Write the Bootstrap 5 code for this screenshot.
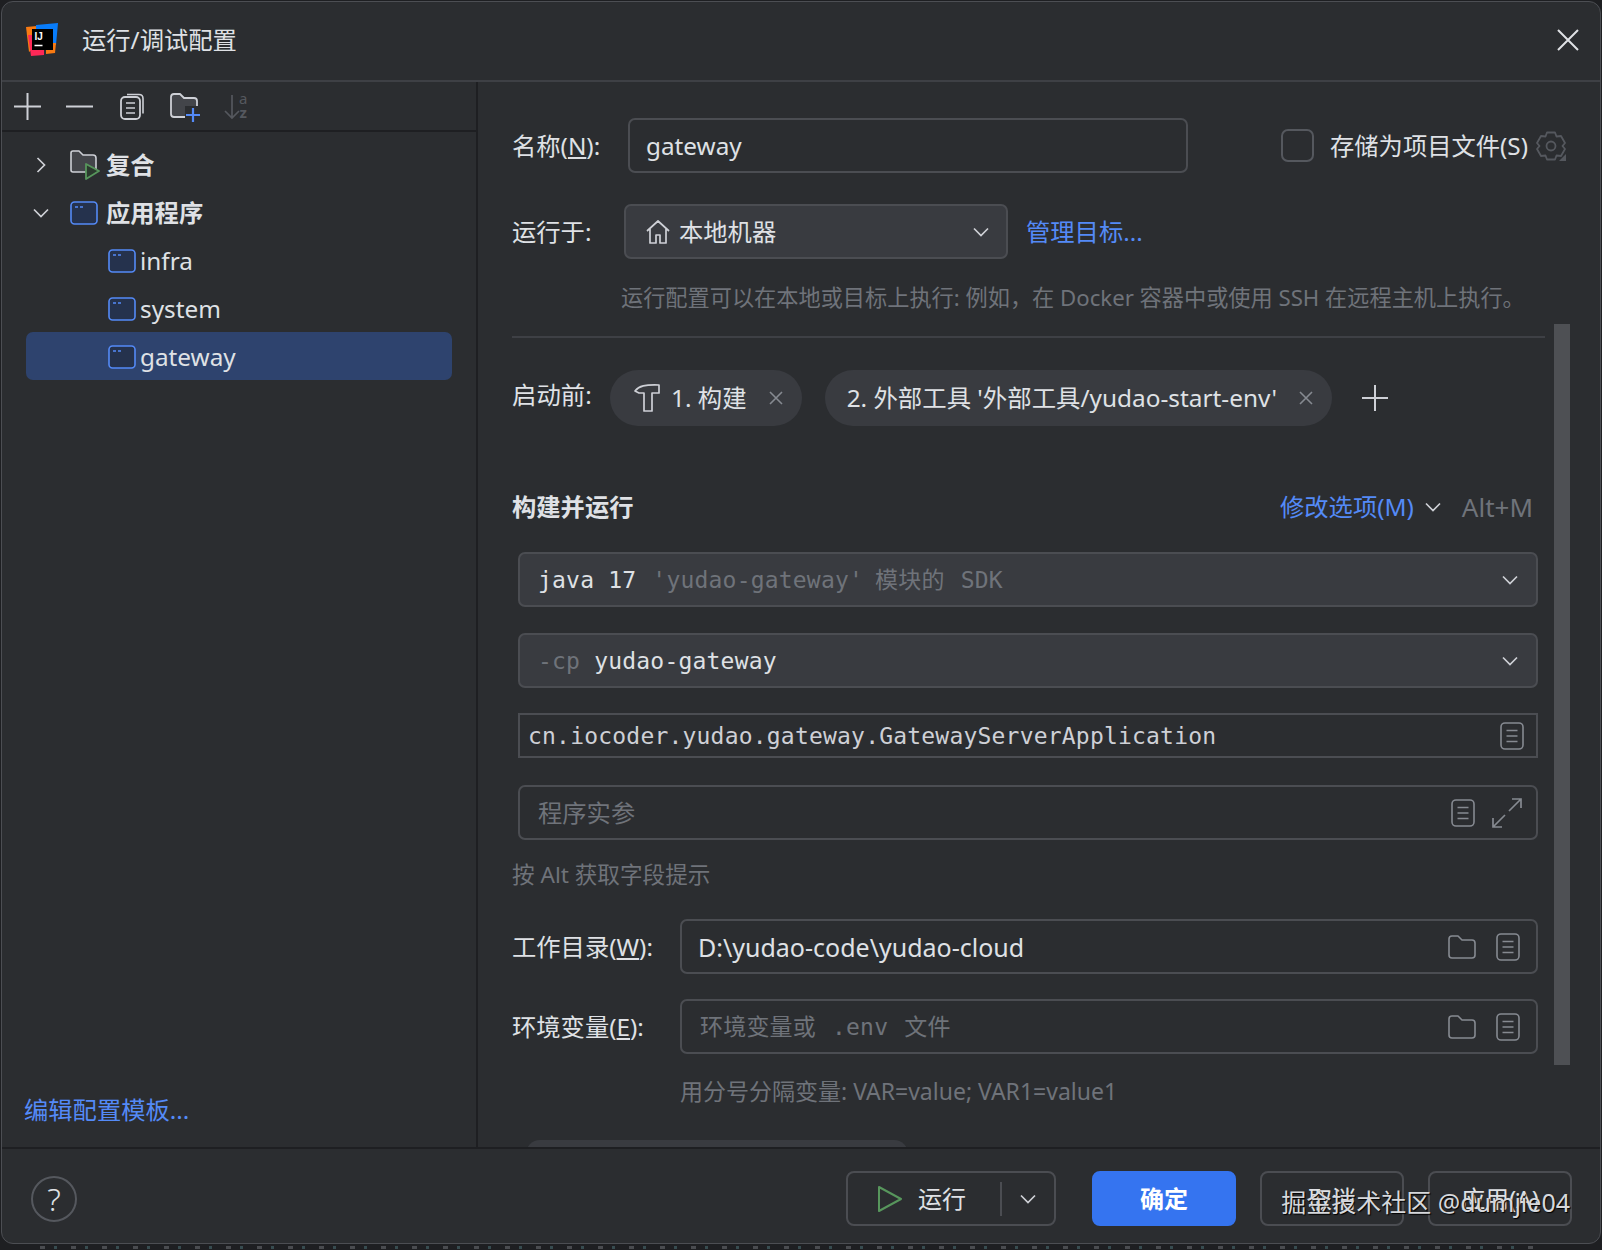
<!DOCTYPE html>
<html lang="zh-CN">
<head>
    <meta charset="UTF-8">
    <meta name="viewport" content="width=device-width, initial-scale=1.0">
    <title>运行/调试配置</title>
    <link href="https://cdn.jsdelivr.net/npm/bootstrap@5.3.0/dist/css/bootstrap.min.css" rel="stylesheet">
    <style>
        html, body { margin: 0; height: 1250px; overflow: hidden; background: #1e1f22; }
        body { font-family: "Noto Sans", "Noto Sans CJK SC", sans-serif; font-size: 24.3px; line-height: 34px; color: #dfe1e5; }
        a { color: #548af7; text-decoration: none; }
        svg { display: block; flex-shrink: 0; }
        .svg-defs { position: absolute; }

        .bottom-strip { position: absolute; left: 40px; right: 60px; top: 1246px; height: 3px;
            background: repeating-linear-gradient(90deg, #8b8e94 0 5px, transparent 5px 14px, #5d8f95 14px 17px, transparent 17px 31px); opacity: .4; }
        .dlg { position: relative; width: 1600px; height: 1243px; margin: 1px 0 0 1px; background: #2b2d30; border: 1px solid #4c4e53; border-radius: 12px; overflow: hidden; }
        .dlg-head { height: 80px; flex-shrink: 0; padding: 0 24px 3px; border-bottom: 2px solid #3e4045; }
        .dlg-title { margin-left: 22px; }
        .dlg-close { margin-right: -3px; }
        .dlg-main { height: 1065px; overflow: hidden; }

        .side { width: 476px; flex-shrink: 0; border-right: 2px solid #1e1f22; }
        .side-tools { height: 50px; flex-shrink: 0; padding-left: 12px; gap: 25px; border-bottom: 2px solid #1e1f22; }
        .tool-copy { margin-left: 2px; }
        .tool-low { margin-top: 4px; margin-right: -2px; }
        .tree { padding-top: 9px; }
        .tree-row { height: 48px; margin: 0 24px; border-radius: 7px; padding-left: 3px; }
        .tree-row.is-sel { background: #2e436e; margin-top: -1px; padding-top: 1px; }
        .tree-chev { width: 24px; margin-right: 17px; }
        .tree-row b { font-weight: 700; margin-left: 6px; }
        .tree-row b.app-name { margin-left: 8px; }
        .tree-row span { margin-left: 4px; }
        .tree-row.tree-kid { padding-left: 82px; }
        .side-link { margin: auto 0 20px 22px; }

        .pane { position: relative; flex-grow: 1; min-width: 0; padding: 36px 55px 0 34px; overflow: hidden; }
        .scroll-thumb { position: absolute; top: 242px; right: 30px; width: 16px; height: 741px; background: #4e5054; }
        .lbl { flex-shrink: 0; }
        .lbl-name { width: 116px; }
        .lbl-on { width: 112px; }
        .lbl-pre { width: 98px; margin-bottom: 6px; }
        .fld { height: 55px; flex-shrink: 0; border: 2px solid #4b4d52; border-radius: 7px; padding: 0 16px; }
        .fld-fill { background: #393b40; }
        .name-fld { width: 560px; }
        .chk { width: 33px; height: 33px; border: 2px solid #55585e; border-radius: 7px; margin-left: 93px; margin-right: 16px; flex-shrink: 0; }
        .gear { margin-right: -30px; }
        .run-on { margin-top: 31px; }
        .on-fld { width: 384px; padding: 0 17px 0 19px; }
        .on-link { margin-left: 18px; }
        .hint { color: #6f737a; font-size: 23px; }
        .hint-run { margin: 22px 0 0 109px; font-size: 22.2px; }
        .hint-alt { margin-top: 18px; font-size: 22.6px; }
        .hint-env { margin: 20px 0 0 168px; }
        .pane-rule { height: 0; margin-top: 21px; border-top: 2px solid #3e4045; }
        .chips { margin-top: 32px; font-size: 24.4px; }
        .chip { height: 56px; flex-shrink: 0; background: #393b40; border-radius: 28px; padding: 0 18px 0 22px; gap: 9px; }
        .chip-2 { margin-left: 23px; }
        .chip-x { margin-left: 12px; }
        .chip-add { margin-left: 30px; }
        .sect-head { margin-top: 64px; margin-right: 12px; }
        .sect-head b { font-weight: 700; }
        .sect-chev { margin-left: 11px; }
        .alt-key { margin-left: 21px; font-size: 26px; }
        .mono { font-family: "DejaVu Sans Mono", "Noto Sans CJK SC", monospace; font-size: 23px; letter-spacing: .2px; }
        .dim { color: #6f737a; }
        .mono-gap { margin-left: 14px; }
        .mono-cjk { margin-left: 12px; }
        .rows { margin: 28px 7px 0 6px; }
        .fld-box { margin-top: 26px; }
        .fld-pad { padding-left: 18px; }
        .fld-flat { height: 45px; margin-top: 25px; border-radius: 0; padding: 0 12px 0 8px; color: #ced0d6; }
        .fld-args { margin-top: 27px; padding: 0 14px 0 18px; }
        .args-wide { margin-left: 17px; }
        .chev-end { margin-right: 2px; }
        .fld-wide { width: 858px; }
        .path-val { font-size: 25px; }
        .row-wd { margin-top: 25px; margin-right: 7px; }
        .row-work { margin-top: 27px; }
        .wd-lbl { width: 168px; }
        .fld-tools { gap: 20px; }
        .tail-pill { width: 382px; height: 50px; margin: 32px 0 0 14px; background: #393b40; border-radius: 14px 14px 0 0; }

        .dlg-foot { position: relative; height: 96px; flex-shrink: 0; padding: 5px 28px 0 29px; border-top: 2px solid #1e1f22; }
        .help { width: 46px; height: 46px; border: 2px solid #55585e; border-radius: 50%; font-size: 32px; font-weight: 300; }
        .btn-ide { height: 55px; font-size: 24px; line-height: 1; color: #dfe1e5; background: transparent; border: 2px solid #4b4d52; border-radius: 8px; --bs-btn-padding-y: 0; flex-shrink: 0; }
        .btn-run { width: 210px; padding: 0; margin-right: 36px; }
        .btn-run .run-l { width: 152px; gap: 15px; padding-left: 29px; }
        .btn-run .run-sep { width: 2px; height: 34px; background: #4b4d52; }
        .btn-ok { width: 144px; margin-right: 24px; background: #3574f0; border-color: #3574f0; color: #fff; font-weight: 700; }
        .btn-gap { width: 144px; margin-right: 24px; }
        .btn-last { width: 144px; }
        .stamp { position: absolute; right: 30px; top: 35px; font-size: 25px; line-height: 36px; color: #d6d8dc; text-shadow: 1px 1px 1px #000; white-space: nowrap; pointer-events: none; }
    </style>
</head>
<body>
    <svg class="svg-defs" width="0" height="0">
        <defs>
            <symbol id="i-app" viewBox="0 0 28 24">
                <rect x="1" y="1" width="26" height="22" rx="3.5" fill="#25324d" stroke="#548af7" stroke-width="1.6"/>
                <path d="M5 6h3M10 6h3" stroke="#548af7" stroke-width="1.4"/>
            </symbol>
            <symbol id="i-doc" viewBox="0 0 24 28">
                <rect x="1" y="1" width="22" height="26" rx="4" fill="none" stroke="#868a91" stroke-width="1.6"/>
                <path d="M6.5 8.5h11M6.5 14h11M6.5 19.5h11" stroke="#868a91" stroke-width="1.6"/>
            </symbol>
            <symbol id="i-folder" viewBox="0 0 28 24">
                <path d="M1 4q0-3 3-3h6l4 4h10q3 0 3 3v12q0 3-3 3H4q-3 0-3-3z" fill="none" stroke="#868a91" stroke-width="1.6" stroke-linejoin="round"/>
            </symbol>
            <symbol id="i-chev" viewBox="0 0 16 10">
                <path d="M1 1.500l7 7 7-7" fill="none" stroke="#ced0d6" stroke-width="1.7"/>
            </symbol>
            <symbol id="i-x" viewBox="0 0 16 16">
                <path d="M2 2l12 12M14 2L2 14" stroke="#868a91" stroke-width="1.6"/>
            </symbol>
        </defs>
    </svg>

    <div class="bottom-strip"></div>

    <div class="dlg d-flex flex-column">
        <!-- title bar -->
        <div class="dlg-head d-flex align-items-center">
            <svg width="34" height="33" viewBox="0 0 34 33">
                <path d="M0 4l11-1 0 20L3 29z" fill="#f97a12"/>
                <path d="M10 2L32 0l-2 22-20 2z" fill="#087cfa"/>
                <path d="M2 12l16 0 0 20-13 1z" fill="#fe2857"/>
                <path d="M20 20l10 0 -1 10-9 1z" fill="#f97a12"/>
                <rect x="6" y="6" width="21" height="21" fill="#000"/>
                <text x="8.500" y="16.500" font-family="Liberation Sans, sans-serif" font-size="10" font-weight="700" fill="#fff">IJ</text>
                <path d="M8.500 22.500h8" stroke="#fff" stroke-width="1.600"/>
            </svg>
            <div class="dlg-title">运行/调试配置</div>
            <svg class="dlg-close ms-auto" width="22" height="22" viewBox="0 0 22 22"><path d="M1 1l20 20M21 1L1 21" stroke="#dfe1e5" stroke-width="2"/></svg>
        </div>

        <div class="dlg-main d-flex">
            <!-- left tree -->
            <div class="side d-flex flex-column">
                <div class="side-tools d-flex align-items-center">
                    <svg width="27" height="27" viewBox="0 0 27 27"><path d="M13.500 0v27M0 13.500h27" stroke="#ced0d6" stroke-width="2"/></svg>
                    <svg width="27" height="27" viewBox="0 0 27 27"><path d="M0 13.500h27" stroke="#ced0d6" stroke-width="2"/></svg>
                    <svg class="tool-copy" width="25" height="27" viewBox="0 0 25 27"><path d="M7 1.500h12q4 0 4 4v15" fill="none" stroke="#ced0d6" stroke-width="1.600"/><rect x="1" y="4" width="19" height="22" rx="4" fill="none" stroke="#ced0d6" stroke-width="1.800"/><path d="M6 10h9M6 15h9M6 20h9" stroke="#ced0d6" stroke-width="1.700"/></svg>
                    <svg class="tool-low" width="31" height="30" viewBox="0 0 31 30"><path d="M1 4q0-3 3-3h6l4 4h10q3 0 3 3v13q0 3-3 3H4q-3 0-3-3z" fill="#43454a" stroke="#ced0d6" stroke-width="1.800" stroke-linejoin="round"/><rect x="15" y="13" width="16" height="17" fill="#2b2d30"/><path d="M23 15v14M16 22h14" stroke="#548af7" stroke-width="2.200"/></svg>
                    <svg width="28" height="34" viewBox="0 0 28 34"><path d="M8 6v23M1 22l7 7 7-7" fill="none" stroke="#55585e" stroke-width="1.700"/><text x="15" y="15" font-family="Noto Sans, sans-serif" font-size="15" fill="#55585e">a</text><text x="15.500" y="29" font-family="Noto Sans, sans-serif" font-size="15" font-weight="700" fill="#55585e">z</text></svg>
                </div>
                <div class="tree">
                    <div class="tree-row d-flex align-items-center">
                        <div class="tree-chev d-flex justify-content-center"><svg width="10" height="16" viewBox="0 0 10 16"><path d="M1.500 1l7 7-7 7" fill="none" stroke="#ced0d6" stroke-width="1.700"/></svg></div>
                        <svg width="30" height="30" viewBox="0 0 30 30"><path d="M1 3q0-2 2-2h6l4 4h10q3 0 3 3v14H3q-2 0-2-2z" fill="#43454a" stroke="#ced0d6" stroke-width="1.600" stroke-linejoin="round"/><path d="M16 14l13 7-13 8z" fill="#2b3a2e" stroke="#57965c" stroke-width="1.800" stroke-linejoin="round"/></svg>
                        <b>复合</b>
                    </div>
                    <div class="tree-row d-flex align-items-center">
                        <div class="tree-chev d-flex justify-content-center"><svg width="16" height="10" viewBox="0 0 16 10"><use href="#i-chev"/></svg></div>
                        <svg width="28" height="24" viewBox="0 0 28 24"><use href="#i-app"/></svg>
                        <b class="app-name">应用程序</b>
                    </div>
                    <div class="tree-row tree-kid d-flex align-items-center">
                        <svg width="28" height="24" viewBox="0 0 28 24"><use href="#i-app"/></svg>
                        <span>infra</span>
                    </div>
                    <div class="tree-row tree-kid d-flex align-items-center">
                        <svg width="28" height="24" viewBox="0 0 28 24"><use href="#i-app"/></svg>
                        <span>system</span>
                    </div>
                    <div class="tree-row tree-kid is-sel d-flex align-items-center">
                        <svg width="28" height="24" viewBox="0 0 28 24"><use href="#i-app"/></svg>
                        <span>gateway</span>
                    </div>
                </div>
                <a class="side-link" href="#">编辑配置模板...</a>
            </div>

            <!-- right form -->
            <div class="pane">
                <div class="d-flex align-items-center">
                    <div class="lbl lbl-name">名称(<u>N</u>):</div>
                    <div class="fld name-fld d-flex align-items-center">gateway</div>
                    <div class="chk"></div>
                    <div class="text-nowrap">存储为项目文件(S)</div>
                    <svg class="gear ms-2" width="30" height="30" viewBox="0 0 30 30">
                        <path d="M11 1.500h8l1.500 4 4.500-.5 4 7-2.500 3 2.500 3-4 7-4.500-.5-1.500 4h-8l-1.500-4-4.500.5-4-7 2.500-3-2.500-3 4-7 4.500.5z" fill="none" stroke="#55585e" stroke-width="1.800" stroke-linejoin="round"/>
                        <circle cx="15" cy="15" r="4.500" fill="none" stroke="#55585e" stroke-width="1.800"/>
                        <path d="M30 23v7h-7z" fill="#55585e"/>
                    </svg>
                </div>

                <div class="run-on d-flex align-items-center">
                    <div class="lbl lbl-on">运行于:</div>
                    <div class="fld fld-fill on-fld d-flex align-items-center">
                        <svg class="me-2" width="26" height="26" viewBox="0 0 26 26"><path d="M2 12L13 2l11 10M5 10v14h6v-8h4v8h6V10" fill="none" stroke="#ced0d6" stroke-width="1.700" stroke-linejoin="round"/></svg>
                        <span>本地机器</span>
                        <svg class="ms-auto" width="16" height="10" viewBox="0 0 16 10"><use href="#i-chev"/></svg>
                    </div>
                    <a href="#" class="on-link">管理目标...</a>
                </div>

                <div class="hint hint-run text-nowrap">运行配置可以在本地或目标上执行: 例如，在 Docker 容器中或使用 SSH 在远程主机上执行。</div>
                <div class="pane-rule"></div>

                <div class="chips d-flex align-items-center">
                    <div class="lbl lbl-pre">启动前:</div>
                    <div class="chip d-flex align-items-center">
                        <svg width="30" height="30" viewBox="0 0 30 30"><path d="M3 8C7 3 13 1.500 27 2v8H20v18h-8V10H7z" fill="none" stroke="#ced0d6" stroke-width="1.700" stroke-linejoin="round"/></svg>
                        <span>1. 构建</span>
                        <svg class="chip-x" width="16" height="16" viewBox="0 0 16 16"><use href="#i-x"/></svg>
                    </div>
                    <div class="chip chip-2 d-flex align-items-center">
                        <span class="text-nowrap">2. 外部工具 '外部工具/yudao-start-env'</span>
                        <svg class="chip-x" width="16" height="16" viewBox="0 0 16 16"><use href="#i-x"/></svg>
                    </div>
                    <svg class="chip-add" width="26" height="26" viewBox="0 0 26 26"><path d="M13 0v26M0 13h26" stroke="#ced0d6" stroke-width="2"/></svg>
                </div>

                <div class="sect-head d-flex align-items-center">
                    <b>构建并运行</b>
                    <a href="#" class="ms-auto">修改选项(M)</a>
                    <svg class="sect-chev" width="16" height="10" viewBox="0 0 16 10"><use href="#i-chev"/></svg>
                    <span class="alt-key dim">Alt+M</span>
                </div>

                <div class="rows">
                    <div class="fld fld-pad fld-fill d-flex align-items-center mono">
                        <span>java 17</span><span class="dim ms-3">'yudao-gateway'</span><span class="dim mono-cjk">模块的</span><span class="dim ms-3">SDK</span>
                        <svg class="chev-end ms-auto" width="16" height="10" viewBox="0 0 16 10"><use href="#i-chev"/></svg>
                    </div>
                    <div class="fld fld-box fld-pad fld-fill d-flex align-items-center mono">
                        <span class="dim">-cp</span><span class="mono-gap">yudao-gateway</span>
                        <svg class="chev-end ms-auto" width="16" height="10" viewBox="0 0 16 10"><use href="#i-chev"/></svg>
                    </div>
                    <div class="fld fld-flat d-flex align-items-center mono">
                        <span>cn.iocoder.yudao.gateway.GatewayServerApplication</span>
                        <svg class="ms-auto" width="24" height="28" viewBox="0 0 24 28"><use href="#i-doc"/></svg>
                    </div>
                    <div class="fld fld-args d-flex align-items-center">
                        <span class="dim">程序实参</span>
                        <svg class="ms-auto" width="24" height="28" viewBox="0 0 24 28"><use href="#i-doc"/></svg>
                        <svg class="args-wide" width="30" height="30" viewBox="0 0 30 30"><path d="M17 13L29 1M20 1h9v9M13 17L1 29M1 20v9h9" fill="none" stroke="#868a91" stroke-width="1.700"/></svg>
                    </div>
                </div>

                <div class="hint hint-alt">按 Alt 获取字段提示</div>

                <div class="row-wd row-work d-flex align-items-center">
                    <div class="lbl wd-lbl">工作目录(<u>W</u>):</div>
                    <div class="fld fld-wide d-flex align-items-center">
                        <span class="path-val">D:\yudao-code\yudao-cloud</span>
                        <div class="fld-tools ms-auto d-flex align-items-center">
                            <svg width="28" height="24" viewBox="0 0 28 24"><use href="#i-folder"/></svg>
                            <svg width="24" height="28" viewBox="0 0 24 28"><use href="#i-doc"/></svg>
                        </div>
                    </div>
                </div>
                <div class="row-wd d-flex align-items-center">
                    <div class="lbl wd-lbl">环境变量(<u>E</u>):</div>
                    <div class="fld fld-wide fld-pad d-flex align-items-center mono">
                        <span class="dim">环境变量或</span><span class="dim ms-3">.env</span><span class="dim ms-3">文件</span>
                        <div class="fld-tools ms-auto d-flex align-items-center">
                            <svg width="28" height="24" viewBox="0 0 28 24"><use href="#i-folder"/></svg>
                            <svg width="24" height="28" viewBox="0 0 24 28"><use href="#i-doc"/></svg>
                        </div>
                    </div>
                </div>
                <div class="hint hint-env">用分号分隔变量: VAR=value; VAR1=value1</div>
                <div class="tail-pill"></div>

                <div class="scroll-thumb"></div>
            </div>
        </div>

        <!-- buttons -->
        <div class="dlg-foot d-flex align-items-center">
            <div class="help d-flex align-items-center justify-content-center">?</div>
            <button type="button" class="btn btn-ide btn-run ms-auto d-flex align-items-center">
                <span class="run-l d-flex align-items-center">
                    <svg width="26" height="28" viewBox="0 0 26 28"><path d="M2 2l22 12L2 26z" fill="none" stroke="#57965c" stroke-width="2" stroke-linejoin="round"/></svg>
                    <span>运行</span>
                </span>
                <span class="run-sep"></span>
                <span class="flex-grow-1 d-flex justify-content-center"><svg width="16" height="10" viewBox="0 0 16 10"><use href="#i-chev"/></svg></span>
            </button>
            <button type="button" class="btn btn-ide btn-ok">确定</button>
            <button type="button" class="btn btn-ide btn-gap">取消</button>
            <button type="button" class="btn btn-ide btn-last">应用(A)</button>
            <div class="stamp">掘金技术社区 @dumjie04</div>
        </div>
    </div>

    <script src="https://cdn.jsdelivr.net/npm/bootstrap@5.3.0/dist/js/bootstrap.bundle.min.js"></script>
</body>
</html>
